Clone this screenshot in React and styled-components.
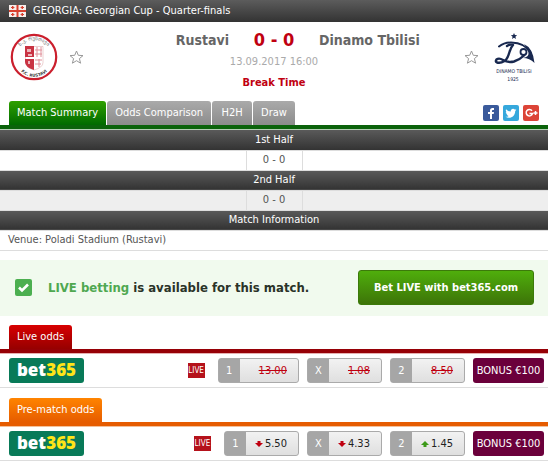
import styled, { createGlobalStyle } from "styled-components";

const GlobalStyle = createGlobalStyle`
  * {
    box-sizing: border-box;
  }

  body {
    margin: 0;
    background: #fff;
    color: #555;
    font: 11px/14px "DejaVu Sans Condensed", "DejaVu Sans", sans-serif;
  }

  button {
    font: inherit;
    border: 0;
    cursor: pointer;
  }

  a {
    color: inherit;
    text-decoration: none;
  }
`;

const TopBar = styled.header`
  display: flex;
  align-items: center;
  gap: 7px;
  height: 22px;
  padding: 0 9px;
  background: linear-gradient(#5c5c5c, #333);
  color: #fff;
`;

const MatchHeader = styled.section`
  display: flex;
  align-items: flex-start;
  padding: 10px 10px 0;
  height: 79px;
`;

const Side = styled.div`
  display: flex;
  flex-direction: ${({ $away }) => ($away ? "row-reverse" : "row")};
  align-items: center;
  gap: 11px;
  height: 50px;
`;

const Star = styled.button`
  display: flex;
  padding: 0;
  background: none;
`;

const Center = styled.div`
  flex: 1;
  text-align: center;
`;

const Teams = styled.div`
  display: grid;
  grid-template-columns: 1fr 90px 1fr;
  align-items: center;
  height: 14px;
`;

const Team = styled.h2`
  margin: 0;
  color: #666;
  font: bold 14px/16px "DejaVu Sans Condensed", sans-serif;
  text-align: ${({ $away }) => ($away ? "left" : "right")};
`;

const Score = styled.strong`
  color: #c00010;
  font-size: 18px;
`;

const DateLine = styled.p`
  margin: 9px 0 7px;
  color: #aaa;
`;

const Status = styled.p`
  margin: 0;
  color: #c00010;
  font-weight: bold;
`;

const tabColors = {
  green: "linear-gradient(#2fa000, #006a00)",
  grey: "linear-gradient(#aaa, #8c8c8c)",
  red: "linear-gradient(#d80000, #960000)",
  orange: "linear-gradient(#ff8400, #e65c00)",
};

const lineColors = {
  green: "#0b630b",
  red: "#960006",
  orange: "#e65c00",
};

const edgeColors = {
  green: "#b5cfb5",
  red: "#e6b0b0",
  orange: "#f4c09a",
};

const TabBar = styled.nav`
  display: flex;
  gap: 1px;
  padding: 0 9px;
  border-bottom: 4px solid ${({ $color }) => lineColors[$color]};
  box-shadow: 0 1px ${({ $color }) => edgeColors[$color]};
`;

const Tab = styled.button`
  min-width: 40px;
  height: 24px;
  padding: 0 8px;
  border-radius: 3px 3px 0 0;
  background: ${({ $color }) => tabColors[$color]};
  color: #fff;
`;

const Social = styled.div`
  display: flex;
  gap: 4px;
  margin-left: auto;
  padding-top: 4px;
`;

const SocialLink = styled.a`
  display: flex;
  width: 16px;
  height: 16px;
  border-radius: 2px;
  overflow: hidden;
  background: ${({ $bg }) => $bg};
`;

const Summary = styled.table`
  width: 100%;
  margin-top: 1px;
  border-collapse: collapse;
  table-layout: fixed;

  th {
    height: 20px;
    padding: 0;
    border-bottom: 1px solid #ddd;
    background: linear-gradient(#5a5a5a, #333);
    color: #fff;
    font-weight: normal;
  }
`;

const ScoreColumn = styled.col`
  width: 56px;
`;

const ResultRow = styled.tr`
  height: 20px;
  background: ${({ $odd }) => ($odd ? "#eee" : "#fff")};
`;

const Cell = styled.td`
  padding: 0;
  border-bottom: 1px solid #ddd;
  text-align: center;
`;

const ResultCell = styled(Cell)`
  border-left: 1px solid #ddd;
  border-right: 1px solid #ddd;
`;

const VenueCell = styled(Cell)`
  height: 20px;
  padding-left: 8px;
  text-align: left;
`;

const Banner = styled.section`
  display: flex;
  align-items: center;
  gap: 15px;
  height: 56px;
  margin: 9px 0 9px;
  padding: 0 14px;
  background: #f1faee;
  color: #2a3328;
  font-size: 13px;
  font-weight: bold;

  em {
    color: #4fa850;
    font-style: normal;
  }
`;

const BetButton = styled.button`
  height: 35px;
  margin-left: auto;
  padding: 1px 15px 0;
  border: 1px solid #3c7a0a;
  border-radius: 3px;
  background: linear-gradient(#4fae0c, #3d7408);
  color: #fff;
  font-size: 11px;
  font-weight: bold;
`;

const Odds = styled.section`
  margin-bottom: 10px;
`;

const OddsRow = styled.div`
  display: flex;
  align-items: center;
  gap: 8px;
  height: 35px;
  padding: 1px 4px 0 9px;
  border-bottom: 1px solid #ddd;
`;

const Bookmaker = styled.a`
  width: 75px;
  height: 25px;
  margin-right: auto;
  border-radius: 3px;
  background: #087a58;
  color: #fff;
  font: 800 17px/24px "Open Sans", "Noto Sans", sans-serif;
  text-align: center;

  span {
    color: #ffe418;
  }
`;

const LiveBadge = styled.span`
  width: 17px;
  height: 15px;
  margin-right: 5px;
  background: #b5121b;
  color: #fff;
  font: 8px/15px "DejaVu Sans Condensed", sans-serif;
  text-align: center;
`;

const Odd = styled.a`
  display: flex;
  align-items: center;
  min-width: 75px;
  height: 25px;
  border: 1px solid #aaa;
  border-radius: 3px;
  background: linear-gradient(#f2f2f2, #dfdfdf);
  color: #222;
`;

const OddLabel = styled.span`
  align-self: stretch;
  width: 21px;
  background: #a6a6a6;
  color: #fff;
  line-height: 24px;
  text-align: center;
`;

const OddValue = styled.span`
  flex: 1;
  display: flex;
  align-items: center;
  justify-content: flex-end;
  gap: 2px;
  padding: 1px 11px 0 9px;

  del {
    color: #c00010;
  }
`;

const ArrowBox = styled.svg`
  width: 8px;
  height: 8px;
`;

const Bonus = styled.a`
  width: 71px;
  height: 25px;
  border-radius: 3px;
  background: #6b003b;
  color: #fff;
  line-height: 25px;
  text-align: center;
  white-space: nowrap;
`;

const Flag = () => (
  <svg width="17" height="12" viewBox="0 0 17 12" aria-label="Georgia">
    <rect width="17" height="12" fill="#f7eeec" />
    <path d="M7.500 0h2v12h-2zM0 5h17v2H0z" fill="#d8402f" />
    <path
      d="M3 1h1.400v3H3zM2 2h3.400v1H2zM12.600 1H14v3h-1.400zM11.600 2H15v1h-3.400zM3 8h1.400v3H3zM2 9h3.400v1H2zM12.600 8H14v3h-1.400zM11.600 9H15v1h-3.400z"
      fill="#d8402f"
    />
  </svg>
);

const RustaviLogo = () => (
  <svg width="48" height="50" viewBox="0 0 48 50" aria-label="Rustavi">
    <defs>
      <path id="arcTop" d="M7 20a18 18 0 0 1 34 0" />
      <path id="arcBottom" d="M8 36a19 19 0 0 0 32 0" />
    </defs>
    <circle cx="24" cy="25" r="22.2" fill="#fff" stroke="#cb1f2d" strokeWidth="2.200" />
    <path d="M15.500 14.500h17.500v16q0 5-9 7.500-8.500-2.500-8.500-7.500z" fill="#fff" stroke="#d9a0a0" strokeWidth=".5" />
    <path d="M15 14h9v11h-9zM15 27h9v11q-9-3-9-8z" fill="#c93343" />
    <path d="M27 15v10M31 15v10M25 18h7M25 22h7M25 28h7M25 32h6M29 27v8" stroke="#e0909a" />
    <path d="M17 17h4v3h-4zM18 22h4v2h-4zM18 29h2v3h-2z" fill="#edb5ba" />
    <text fontSize="5" fill="#666" textAnchor="middle" fontFamily="DejaVu Sans">
      <textPath href="#arcTop" startOffset="50%">
        ს.კ. რუსთავი
      </textPath>
    </text>
    <text fontSize="4" fontWeight="bold" fill="#333" textAnchor="middle" fontFamily="DejaVu Sans">
      <textPath href="#arcBottom" startOffset="50%">
        F.C. RUSTAVI
      </textPath>
    </text>
  </svg>
);

const DinamoLogo = () => (
  <svg width="48" height="50" viewBox="0 0 48 50" aria-label="Dinamo Tbilisi">
    <g fill="none" stroke="#18284f" strokeLinecap="round" strokeLinejoin="round">
      <path d="M9 14.500q5-4 12-4 14 0 20 11" strokeWidth="2" />
      <path d="M17 14q3-2 6-1-2 2-3.500 7-2 7-5 9-4 2.500-7.500 1.500-2-1-.5-3 2.500-2 6.500.5 5 3 11 1.500 6-2 10-6" strokeWidth="2.400" />
      <circle cx="33.500" cy="20" r="3" strokeWidth="1.800" />
    </g>
    <path d="M34 12q9 4 10.500 19-5-5-11.500-5 6-1 5.500-5-.5-4-4.500-9z" fill="#18284f" />
    <path
      d="m24 1 .9 2.100 2.200.2-1.700 1.500.6 2.300-2-1.300-2 1.300.6-2.300-1.700-1.500 2.200-.2z"
      fill="#18284f"
    />
    <text x="24" y="41" fontSize="5" fill="#18284f" textAnchor="middle" fontFamily="DejaVu Sans Condensed">
      DINAMO TBILISI
    </text>
    <text x="23" y="49" fontSize="5" fill="#18284f" textAnchor="middle" fontFamily="DejaVu Sans Condensed">
      1925
    </text>
  </svg>
);

const StarIcon = () => (
  <svg width="15" height="15" viewBox="0 0 15 15">
    <path
      d="m7.500 1 1.800 4.300 4.700.3-3.600 3 1.200 4.600-4.100-2.500-4.100 2.500 1.200-4.600-3.600-3 4.700-.3z"
      fill="#fff"
      stroke="#999"
    />
  </svg>
);

const CheckIcon = () => (
  <svg width="19" height="19" viewBox="0 0 19 19">
    <rect x="1" y="1" width="17" height="17" rx="2" fill="#4caf50" />
    <path d="m5 9.500 3 3 6-6" fill="none" stroke="#fff" strokeWidth="2.600" />
  </svg>
);

const Arrow = ({ direction }) => (
  <ArrowBox viewBox="0 0 8 8">
    {direction === "down" && <path d="M2.500 1h3v2H8L4 7 0 3h2.500z" fill="#c00010" />}
    {direction === "up" && <path d="M2.500 7h3V5H8L4 1 0 5h2.500z" fill="#3c9a18" />}
  </ArrowBox>
);

const socials = [
  {
    name: "Facebook",
    bg: "#3a5a9b",
    icon: <path d="M7 14V9H5V7h2V5.500Q7 3 9.500 3H11v2H9.800Q9 5 9 6v1h2l-.3 2H9v5z" fill="#fff" />,
  },
  {
    name: "Twitter",
    bg: "#35a8dc",
    icon: (
      <path
        d="M13.500 4.700l-1.300 1.200c.2 4-2.700 6.900-6.200 6.900-1.300 0-2.500-.4-3.500-1 1.200.1 2.300-.2 3.200-.9-1-.1-1.800-.7-2.100-1.600h1c-1.100-.3-1.800-1.200-1.800-2.300l1 .3C2.800 6.600 2.500 5.300 3.100 4.200c1.200 1.400 2.900 2.300 4.700 2.400-.3-1.500.7-2.900 2.300-2.900.6 0 1.200.3 1.600.7l1.400-.5-.9 1.200z"
        fill="#fff"
      />
    ),
  },
  {
    name: "Google Plus",
    bg: "#dc4437",
    icon: (
      <path
        d="M9 5.800A3.200 3.200 0 1 0 9.500 8.500H6.500M12.500 6v4M10.500 8h4"
        fill="none"
        stroke="#fff"
        strokeWidth="1.500"
      />
    ),
  },
];

const halves = [
  { name: "1st Half", score: "0 - 0" },
  { name: "2nd Half", score: "0 - 0" },
];

const oddsGroups = [
  {
    title: "Live odds",
    color: "red",
    odds: [
      { label: "1", value: "13.00", closed: true },
      { label: "X", value: "1.08", closed: true },
      { label: "2", value: "8.50", closed: true },
    ],
  },
  {
    title: "Pre-match odds",
    color: "orange",
    odds: [
      { label: "1", value: "5.50", direction: "down" },
      { label: "X", value: "4.33", direction: "down" },
      { label: "2", value: "1.45", direction: "up" },
    ],
  },
];

const OddsGroup = ({ title, color, odds }) => (
  <Odds>
    <TabBar $color={color}>
      <Tab $color={color}>{title}</Tab>
    </TabBar>
    <OddsRow>
      <Bookmaker href="#bet365">
        bet<span>365</span>
      </Bookmaker>
      <LiveBadge>LIVE</LiveBadge>
      {odds.map(({ label, value, closed, direction }) => (
        <Odd key={label} href="#odds">
          <OddLabel>{label}</OddLabel>
          <OddValue>
            <Arrow direction={direction} />
            {closed ? <del>{value}</del> : value}
          </OddValue>
        </Odd>
      ))}
      <Bonus href="#bonus">BONUS €100</Bonus>
    </OddsRow>
  </Odds>
);

const App = () => {
  return (
    <>
      <GlobalStyle />
      <TopBar>
        <Flag />
        <span>GEORGIA: Georgian Cup - Quarter-finals</span>
      </TopBar>
      <MatchHeader>
        <Side>
          <RustaviLogo />
          <Star aria-label="Follow Rustavi">
            <StarIcon />
          </Star>
        </Side>
        <Center>
          <Teams>
            <Team>Rustavi</Team>
            <Score>0 - 0</Score>
            <Team $away>Dinamo Tbilisi</Team>
          </Teams>
          <DateLine>13.09.2017 16:00</DateLine>
          <Status>Break Time</Status>
        </Center>
        <Side $away>
          <DinamoLogo />
          <Star aria-label="Follow Dinamo Tbilisi">
            <StarIcon />
          </Star>
        </Side>
      </MatchHeader>
      <TabBar $color="green">
        <Tab $color="green">Match Summary</Tab>
        <Tab $color="grey">Odds Comparison</Tab>
        <Tab $color="grey">H2H</Tab>
        <Tab $color="grey">Draw</Tab>
        <Social>
          {socials.map(({ name, bg, icon }) => (
            <SocialLink key={name} href="#share" aria-label={name} $bg={bg}>
              <svg width="16" height="16" viewBox="0 0 16 16">
                {icon}
              </svg>
            </SocialLink>
          ))}
        </Social>
      </TabBar>
      <Summary>
        <colgroup>
          <col />
          <ScoreColumn />
          <col />
        </colgroup>
        {halves.map(({ name, score }, index) => (
          <tbody key={name}>
            <tr>
              <th colSpan={3}>{name}</th>
            </tr>
            <ResultRow $odd={index % 2 === 1}>
              <Cell />
              <ResultCell>{score}</ResultCell>
              <Cell />
            </ResultRow>
          </tbody>
        ))}
        <tbody>
          <tr>
            <th colSpan={3}>Match Information</th>
          </tr>
          <tr>
            <VenueCell colSpan={3}>Venue: Poladi Stadium (Rustavi)</VenueCell>
          </tr>
        </tbody>
      </Summary>
      <Banner>
        <CheckIcon />
        <span>
          <em>LIVE betting</em> is available for this match.
        </span>
        <BetButton>Bet LIVE with bet365.com</BetButton>
      </Banner>
      {oddsGroups.map((group) => (
        <OddsGroup key={group.title} {...group} />
      ))}
    </>
  );
};

export default App;
